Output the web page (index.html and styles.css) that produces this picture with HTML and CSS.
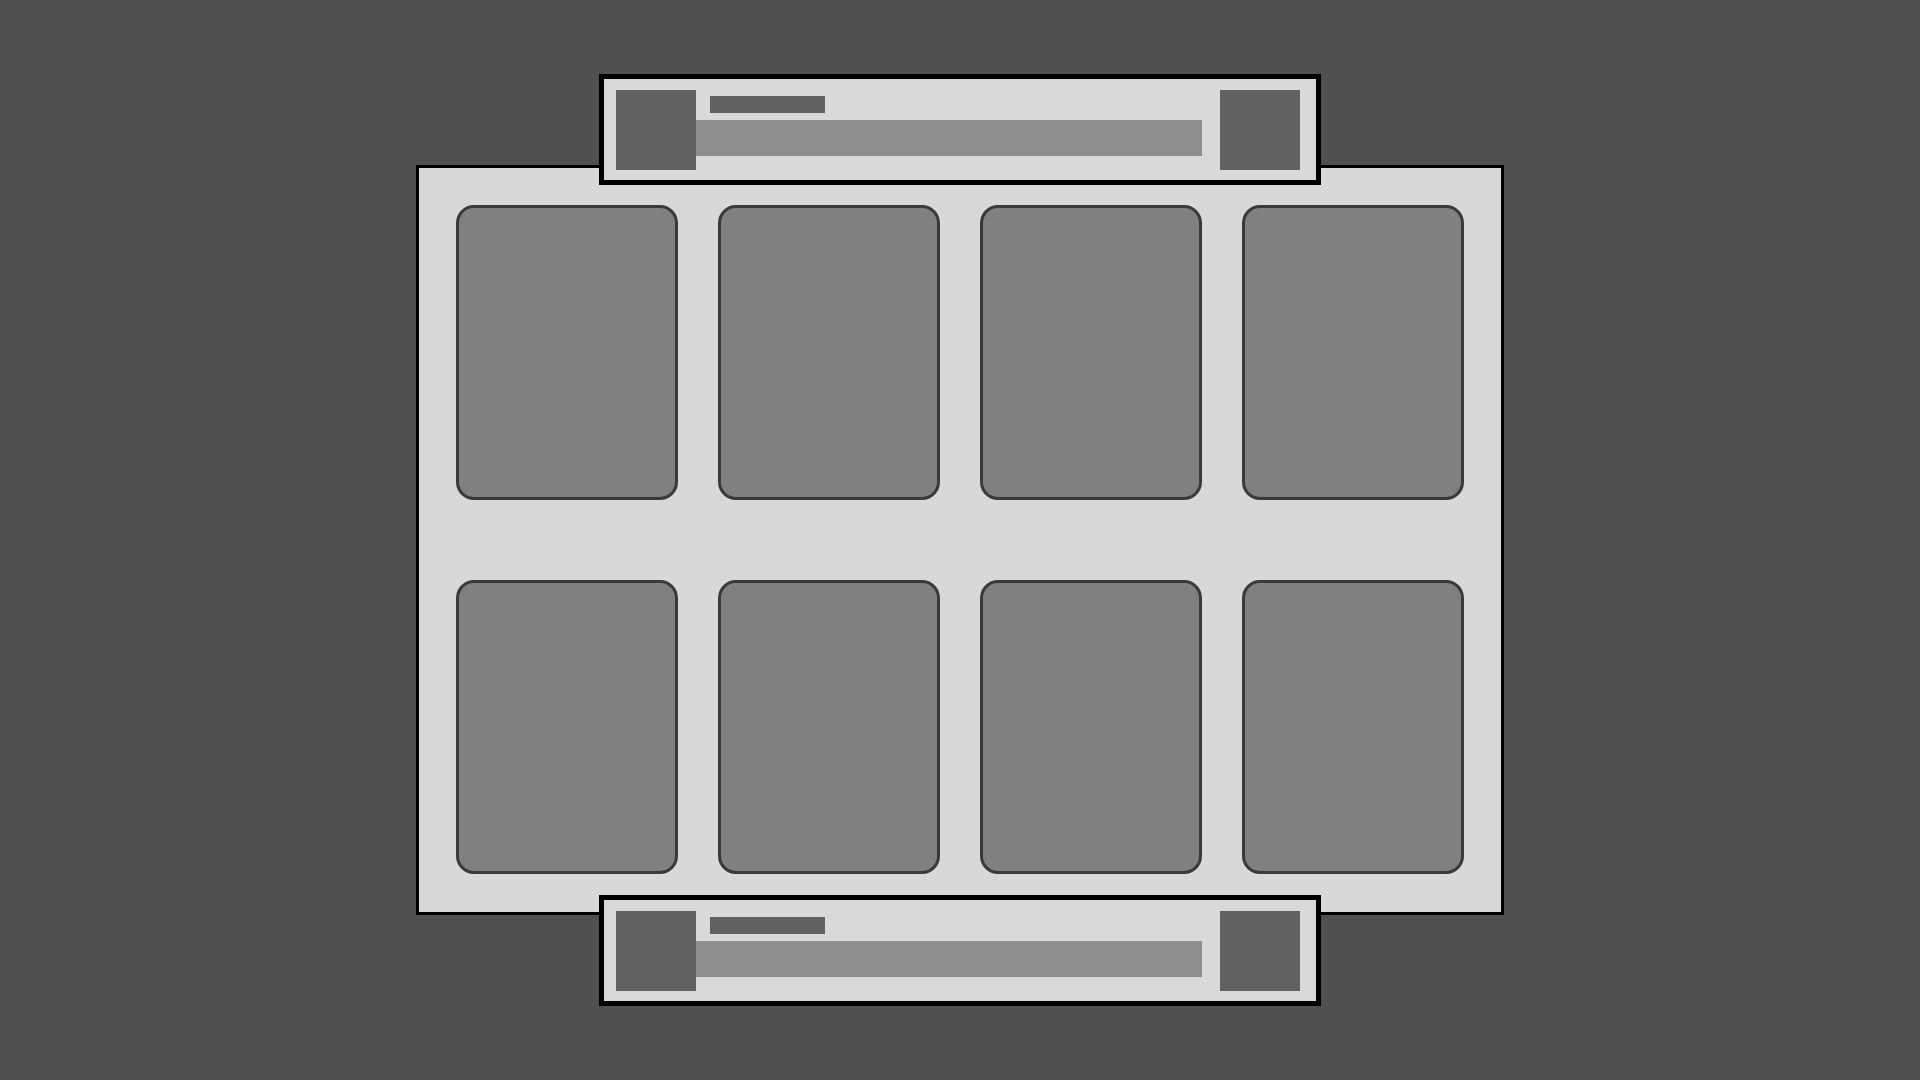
FILE: index.html
```html
<!DOCTYPE html>
<html lang="en">
<head>
<meta charset="utf-8">
<title>Layout</title>
<link rel="stylesheet" href="styles.css">
</head>
<body>
  <div class="stage">
    <div class="bar bar-top">
      <div class="thumb"></div>
      <div class="bar-body">
        <div class="bar-label"></div>
        <div class="bar-track"></div>
      </div>
      <div class="thumb"></div>
    </div>
    <div class="panel">
      <div class="card"></div>
      <div class="card"></div>
      <div class="card"></div>
      <div class="card"></div>
      <div class="card"></div>
      <div class="card"></div>
      <div class="card"></div>
      <div class="card"></div>
    </div>
    <div class="bar bar-bottom">
      <div class="thumb"></div>
      <div class="bar-body">
        <div class="bar-label"></div>
        <div class="bar-track"></div>
      </div>
      <div class="thumb"></div>
    </div>
  </div>
</body>
</html>
```
FILE: styles.css
```css
* { box-sizing: border-box; }
html, body { margin: 0; padding: 0; }
body {
  background: #505050;
  font-family: "Liberation Sans", Arial, sans-serif;
}
.stage {
  height: 100vh;
  display: flex;
  flex-direction: column;
  align-items: center;
  justify-content: center;
}
.bar {
  width: 722px;
  height: 111px;
  background: #d9d9d9;
  border: 5px solid #000;
  display: flex;
  align-items: flex-start;
  padding: 11px 16px 10px 12px;
  position: relative;
  z-index: 1;
}
.bar-bottom { margin-top: -20px; }
.thumb {
  width: 80px;
  height: 80px;
  background: #616161;
  flex: none;
}
.bar-body {
  flex: 1;
  margin-right: 18px;
  display: flex;
  flex-direction: column;
  padding-top: 6px;
}
.bar-label {
  width: 115px;
  height: 17px;
  background: #616161;
  margin-left: 14px;
}
.bar-track {
  height: 36px;
  background: #8e8e8e;
  margin-top: 7px;
}
.panel {
  width: 1088px;
  height: 750px;
  margin-top: -20px;
  background: #d8d8d8;
  border: 3px solid #000;
  padding: 37px 37px 38px 37px;
  display: grid;
  grid-template-columns: repeat(4, 1fr);
  grid-template-rows: repeat(2, 1fr);
  column-gap: 40px;
  row-gap: 80px;
}
.card {
  background: #808080;
  border: 3px solid #3a3a3a;
  border-radius: 18px;
}
```
